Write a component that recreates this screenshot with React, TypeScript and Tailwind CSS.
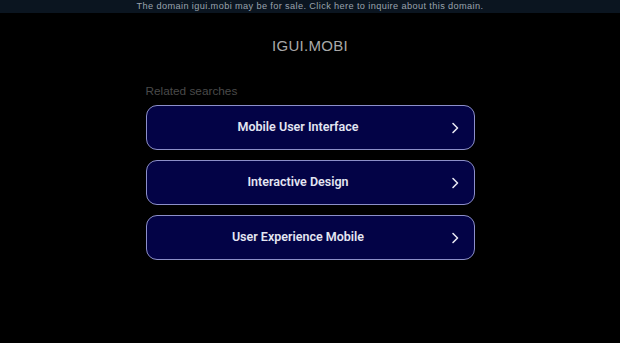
import React from "react";

const items = ["Mobile User Interface", "Interactive Design", "User Experience Mobile"];

function Chevron() {
  return (
    <svg width="10" height="12" viewBox="0 0 10 12" fill="none" stroke="#e6e6f0" strokeWidth="1.6" strokeLinecap="round" strokeLinejoin="round">
      <path d="M3 1.5 L7.5 6 L3 10.5" />
    </svg>
  );
}

export default function App() {
  return (
    <div className="w-[620px] h-[343px] bg-black overflow-hidden" style={{ fontFamily: '"Liberation Sans", Arial, sans-serif' }}>
      <div className="h-[13px] bg-[#0b1520] flex items-center justify-center">
        <span className="text-[9.2px] text-[#9aa3ad] tracking-[0.38px] leading-none">
          The domain igui.mobi may be for sale. Click here to inquire about this domain.
        </span>
      </div>
      <div className="pt-[25px] flex justify-center">
        <span className="text-[15px] text-[#a9a9a9] tracking-[0.3px] leading-none">IGUI.MOBI</span>
      </div>
      <div className="w-[329px] mx-auto mt-[33px]">
        <div className="text-[11.8px] text-[#4a4a4a] leading-none mb-[7px]">Related searches</div>
        <div className="flex flex-col gap-[10px]">
          {items.map((t) => (
            <div
              key={t}
              className="h-[45px] rounded-[11px] border border-[#8c8fc9] bg-[#030346] flex items-center relative pr-[24px]"
            >
              <span
                className="flex-1 text-center text-[12.5px] font-semibold text-[#e4e6f2]"
                style={{ fontFamily: 'Roboto, "Liberation Sans", sans-serif' }}
              >
                {t}
              </span>
              <span className="absolute right-[14px] top-[16px]">
                <Chevron />
              </span>
            </div>
          ))}
        </div>
      </div>
    </div>
  );
}
